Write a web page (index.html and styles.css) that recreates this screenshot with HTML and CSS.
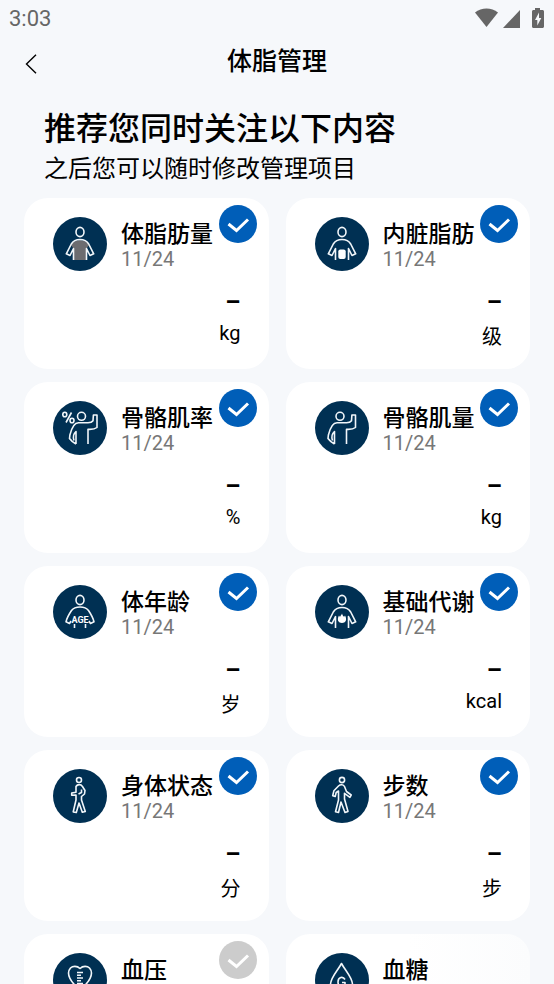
FILE: index.html
```html
<!DOCTYPE html>
<html lang="zh-CN">
<head>
<meta charset="utf-8">
<meta name="viewport" content="width=device-width, initial-scale=1">
<title>体脂管理</title>
<link rel="stylesheet" href="styles.css">
</head>
<body>
<svg class="defs" aria-hidden="true">
  <symbol id="tick" viewBox="0 0 38 38"><path d="M9.500 19l8 6.500 11.500-11" /></symbol>
  <symbol id="torso" viewBox="0 0 54 54">
    <ellipse cx="27" cy="15" rx="4" ry="4.600"/>
    <path d="M20.500 43V31.500l-3.500 7-3.700-1.700 5-9.800c1.800-3 4.200-4.500 8.700-4.500s6.900 1.500 8.700 4.500l5 9.800-3.700 1.700-3.500-7V43"/>
  </symbol>
  <symbol id="flex" viewBox="0 0 54 54">
    <circle cx="25" cy="15.300" r="4"/>
    <path d="M19.500 43c-2.500-1.500-5-3.300-6.500-5.500l.4-3.500c1.800-7.500 4-12.300 8.600-12.300h9.500c2 0 4-.5 5-2l.4-5.700h3.600v12.500c-2.500 2-5.500 2-9 1.800V43M19.500 43V30.500c-3 2.700-3.300 5.300-2 9"/>
  </symbol>
</svg>
<div class="app">
  <div class="status">
    <span class="time">3:03</span>
    <svg class="signals" viewBox="0 0 70 22" aria-hidden="true">
      <path d="M0 4.500C6.500-.8 16.500-.8 23 4.500L11.500 19z"/>
      <path d="M45 2v18H28z"/>
      <path fill-rule="evenodd" d="M60 0h5v2h2.500c.8 0 1.500.7 1.500 1.500v15c0 .8-.7 1.500-1.500 1.500h-9c-.8 0-1.500-.7-1.500-1.500v-15c0-.8.7-1.500 1.500-1.500H60zM64 4.500l-4 7.500h2.300v5.500l4-7.500H64z"/>
    </svg>
  </div>
  <header class="bar">
    <button class="back" type="button" aria-label="返回"><svg viewBox="0 0 12 20"><path d="M11 .8L1.500 10l9.500 9.200"/></svg></button>
    <h1>体脂管理</h1>
  </header>
  <section class="intro">
    <h2>推荐您同时关注以下内容</h2>
    <p>之后您可以随时修改管理项目</p>
  </section>
  <main class="grid">
    <label class="card">
      <svg class="icon" viewBox="0 0 54 54"><path class="gray" d="M20 43V31l-2-3 3-3.500 6-1.500 6 1.500 3 3.500-2 3v12z"/><use href="#torso"/></svg>
      <span class="name">体脂肪量</span><span class="date">11/24</span>
      <span class="value">–</span><span class="unit">kg</span>
      <input type="checkbox" checked><svg class="tick"><use href="#tick"/></svg>
    </label>
    <label class="card">
      <svg class="icon" viewBox="0 0 54 54"><use href="#torso"/><rect class="solid" x="23.300" y="32.500" width="7.400" height="9.500" rx="2"/></svg>
      <span class="name">内脏脂肪</span><span class="date">11/24</span>
      <span class="value">–</span><span class="unit">级</span>
      <input type="checkbox" checked><svg class="tick"><use href="#tick"/></svg>
    </label>
    <label class="card">
      <svg class="icon" viewBox="0 0 54 54"><use href="#flex" x="3.500"/><path d="M18.500 11.500l-5.500 10"/><ellipse cx="11.800" cy="13.500" rx="2" ry="2.300"/><ellipse cx="19" cy="19.500" rx="2" ry="2.300"/></svg>
      <span class="name">骨骼肌率</span><span class="date">11/24</span>
      <span class="value">–</span><span class="unit">%</span>
      <input type="checkbox" checked><svg class="tick"><use href="#tick"/></svg>
    </label>
    <label class="card">
      <svg class="icon" viewBox="0 0 54 54"><use href="#flex"/></svg>
      <span class="name">骨骼肌量</span><span class="date">11/24</span>
      <span class="value">–</span><span class="unit">kg</span>
      <input type="checkbox" checked><svg class="tick"><use href="#tick"/></svg>
    </label>
    <label class="card">
      <svg class="icon" viewBox="0 0 54 54"><ellipse cx="27" cy="15" rx="4" ry="4.600"/><path d="M18 36l-1.500 2.500-3.500-1.700c1-4.500 3.500-8.300 5.500-11.300 2-2.700 5-3.500 8.500-3.500s6.500.8 8.500 3.500c2 3 4.500 6.800 5.500 11.300l-3.500 1.700-1.500-2.500M21.500 39v4M32.500 39v4"/><text x="27" y="37.500">AGE</text></svg>
      <span class="name">体年龄</span><span class="date">11/24</span>
      <span class="value">–</span><span class="unit">岁</span>
      <input type="checkbox" checked><svg class="tick"><use href="#tick"/></svg>
    </label>
    <label class="card">
      <svg class="icon" viewBox="0 0 54 54"><use href="#torso"/><path class="solid" d="M27 28.500c.5 2 1.500 2.500 2 3.500l1-1.500c2.500 4.500.5 7.500-3 7.500s-5.500-3-3-7.500l1 1.500c.5-1.500 1.500-2 2-3.500z"/></svg>
      <span class="name">基础代谢</span><span class="date">11/24</span>
      <span class="value">–</span><span class="unit">kcal</span>
      <input type="checkbox" checked><svg class="tick"><use href="#tick"/></svg>
    </label>
    <label class="card">
      <svg class="icon" viewBox="0 0 54 54"><circle cx="26" cy="11" r="2.500"/><path d="M23 17.500c1.500-2.500 5-2.500 6.300-.2l2.700 4.200-.5 3.500-3 2.500V31l3.800 11.500-3 .8L26 34l-2.700 9.500-3.100-.5L23 31v-5l-4.300.3V24l4.300-.7zM28.500 20.500v3l-3 1.500"/></svg>
      <span class="name">身体状态</span><span class="date">11/24</span>
      <span class="value">–</span><span class="unit">分</span>
      <input type="checkbox" checked><svg class="tick"><use href="#tick"/></svg>
    </label>
    <label class="card">
      <svg class="icon" viewBox="0 0 54 54"><circle cx="27" cy="11" r="2.600"/><path d="M23.500 17c2-1.800 5-1.500 6 .5l2 5 4.700 3.500-1.300 2.300-5.400-4V30l3.500 12.500-3 1L26 33l-2.500 10.500-3-.7L23.500 31v-9l-2.300 1.500-1 4-2.500-.8 1.200-5z"/></svg>
      <span class="name">步数</span><span class="date">11/24</span>
      <span class="value">–</span><span class="unit">步</span>
      <input type="checkbox" checked><svg class="tick"><use href="#tick"/></svg>
    </label>
    <label class="card">
      <svg class="icon" viewBox="0 0 54 54"><path d="M27 15.500c-3-3-7.500-2.500-9.500-.5-5 5.500 0 14 9.500 22 9.500-8 14.500-16.500 9.500-22-2-2-6.500-2.500-9.500.5zM24 19.500h6M24 22.300h4M24 25h6M24 27.800h4M24 30.500h6"/></svg>
      <span class="name">血压</span>
      <input type="checkbox"><svg class="tick"><use href="#tick"/></svg>
    </label>
    <div class="card faded">
      <svg class="icon" viewBox="0 0 54 54"><path d="M26.500 10.500c-4 7.500-11 14-11 21a11 11 0 0 0 22 0c0-7-7-13.500-11-21z"/><path d="M30 26.500c-2-3.500-7-2.500-7 2.500s5 6 7 2.500v-2h-3"/></svg>
      <span class="name">血糖</span>
    </div>
  </main>
</div>
</body>
</html>
```
FILE: styles.css
```css
* { box-sizing: border-box; }

body {
  margin: 0;
  background: #f6f8fb;
  color: #000;
  font-family: Roboto, "Noto Sans CJK SC", sans-serif;
}

.defs { display: none; }

.app {
  display: flex;
  flex-direction: column;
  height: 100vh;
  overflow: hidden;
}

.status {
  display: flex;
  align-items: center;
  justify-content: space-between;
  height: 38px;
  padding: 0 9px;
  color: #666;
}
.time { font-size: 22px; line-height: 38px; }
.signals { width: 70px; height: 22px; fill: #666; }

.bar {
  display: grid;
  grid-template-columns: 48px 1fr 48px;
  align-items: center;
  height: 48px;
}
.back {
  display: flex;
  justify-content: center;
  padding: 4px 0 0 14px;
  border: 0;
  background: none;
}
.back svg { width: 12px; height: 20px; fill: none; stroke: #000; stroke-width: 1.4; }
.bar h1 {
  margin: 0;
  font-size: 25px;
  font-weight: 500;
  line-height: 48px;
  text-align: center;
}

.intro { padding: 20px 44px 12px; }
.intro h2 { margin: 0; font-size: 32px; font-weight: 500; line-height: 46px; }
.intro p { margin: 0; font-size: 24px; line-height: 34px; white-space: nowrap; }

.grid {
  display: grid;
  grid-template-columns: 1fr 1fr;
  gap: 13px 17px;
  flex: 1;
  min-height: 0;
  align-content: start;
  padding: 0 24px;
  overflow: hidden;
}

.card {
  position: relative;
  display: grid;
  grid-template-columns: 54px 1fr;
  grid-template-rows: 36px 12px 49px 1fr;
  column-gap: 14px;
  min-height: 171px;
  padding: 19px 28px 16px 29px;
  border-radius: 24px;
  background: #fff;
}
.faded { background: linear-gradient(to right, #fff 50%, #fbfcfd); }

.icon {
  grid-row: 1 / 3;
  width: 54px;
  height: 54px;
  border-radius: 50%;
  background: #003053;
  fill: none;
  stroke: #f1f6fa;
  stroke-width: 1.6;
  stroke-linejoin: round;
}
.icon .gray { fill: #6c6c70; stroke: none; }
.icon .solid { fill: #fff; stroke: none; }
.icon text {
  fill: #fff;
  stroke: none;
  font-size: 9px;
  font-weight: 700;
  text-anchor: middle;
}

.name { font-size: 23px; font-weight: 500; line-height: 36px; white-space: nowrap; }
.date { color: #777; font-size: 20px; line-height: 12px; }
.value {
  grid-column: 1 / 3;
  align-self: end;
  font-size: 24px;
  font-weight: 700;
  line-height: 24px;
  text-align: right;
}
.unit { grid-column: 1 / 3; padding-top: 7px; font-size: 20px; text-align: right; }

.card input {
  position: absolute;
  top: 7px;
  right: 12px;
  width: 38px;
  height: 38px;
  margin: 0;
  border-radius: 50%;
  background: #ccc;
  appearance: none;
}
.card input:checked { background: #005eb8; }
.tick {
  position: absolute;
  top: 7px;
  right: 12px;
  width: 38px;
  height: 38px;
  fill: none;
  stroke: #fff;
  stroke-width: 3;
  pointer-events: none;
}
```
